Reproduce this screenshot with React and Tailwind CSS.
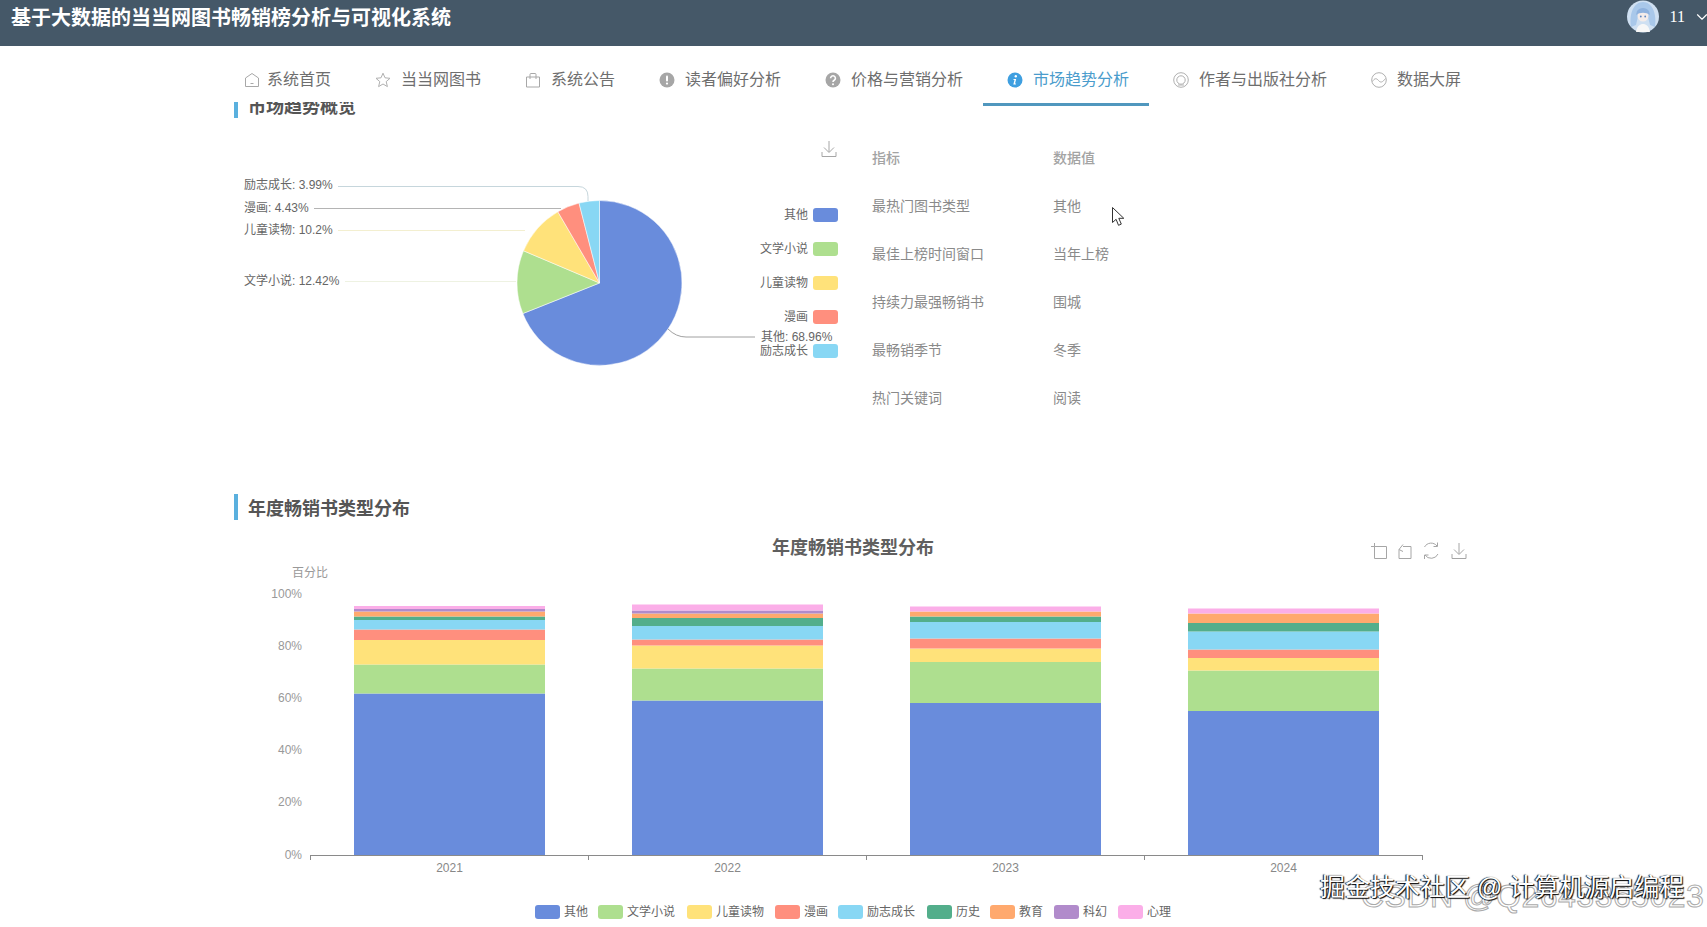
import { ChevronDown } from "lucide-react";

const fontClass = "font-['Liberation_Sans','Noto_Sans_CJK_SC',sans-serif]";

const colors = {
  other: "#698cdc",
  novel: "#aedf8f",
  kids: "#ffe27a",
  comic: "#ff8f7e",
  growth: "#88d7f4",
  history: "#53ae8b",
  edu: "#ffa96e",
  scifi: "#b18bcb",
  psych: "#fbaee8",
};

const navItems = [
  { label: "系统首页", icon: HomeIcon, iconClass: "flex w-[30px] justify-center" },
  { label: "当当网图书", icon: StarIcon },
  { label: "系统公告", icon: BagIcon },
  { label: "读者偏好分析", icon: WarnIcon },
  { label: "价格与营销分析", icon: HelpIcon },
  { label: "市场趋势分析", icon: InfoIcon, active: true },
  { label: "作者与出版社分析", icon: RingIcon },
  { label: "数据大屏", icon: WaveIcon },
];

const tableRows = [
  ["最热门图书类型", "其他"],
  ["最佳上榜时间窗口", "当年上榜"],
  ["持续力最强畅销书", "围城"],
  ["最畅销季节", "冬季"],
  ["热门关键词", "阅读"],
];

const pieData = [
  { name: "其他", value: 68.96, color: colors.other },
  { name: "文学小说", value: 12.42, color: colors.novel },
  { name: "儿童读物", value: 10.2, color: colors.kids },
  { name: "漫画", value: 4.43, color: colors.comic },
  { name: "励志成长", value: 3.99, color: colors.growth },
];

// segment tops in page pixels, bottom of the bar first
const bars = [
  {
    year: "2021",
    x: 354,
    segs: [
      [693.5, colors.other],
      [664.5, colors.novel],
      [640, colors.kids],
      [629.5, colors.comic],
      [620, colors.growth],
      [616.5, colors.history],
      [611.5, colors.edu],
      [609, colors.scifi],
      [606, colors.psych],
    ],
  },
  {
    year: "2022",
    x: 632,
    segs: [
      [700.5, colors.other],
      [668.5, colors.novel],
      [645.5, colors.kids],
      [639.5, colors.comic],
      [626, colors.growth],
      [618, colors.history],
      [613.5, colors.edu],
      [610.5, colors.scifi],
      [604.5, colors.psych],
    ],
  },
  {
    year: "2023",
    x: 910,
    segs: [
      [703, colors.other],
      [662, colors.novel],
      [648.5, colors.kids],
      [638.5, colors.comic],
      [622, colors.growth],
      [616.5, colors.history],
      [611.5, colors.edu],
      [606.5, colors.psych],
    ],
  },
  {
    year: "2024",
    x: 1188,
    segs: [
      [711, colors.other],
      [670.5, colors.novel],
      [658, colors.kids],
      [649.5, colors.comic],
      [631.5, colors.growth],
      [623, colors.history],
      [613.5, colors.edu],
      [608.5, colors.psych],
    ],
  },
];

const barLegend = [
  ["其他", colors.other, 535],
  ["文学小说", colors.novel, 598],
  ["儿童读物", colors.kids, 687],
  ["漫画", colors.comic, 775],
  ["励志成长", colors.growth, 838],
  ["历史", colors.history, 927],
  ["教育", colors.edu, 990],
  ["科幻", colors.scifi, 1054],
  ["心理", colors.psych, 1118],
];

function HomeIcon() {
  return (
    <svg width="16" height="16" viewBox="0 0 16 16" fill="none" stroke="#a8a8a8" strokeWidth="1">
      <path d="M8 1.5 14.5 6v8.5h-13V6z" strokeLinejoin="round" />
      <path d="M6.5 11.5h3" />
    </svg>
  );
}

function StarIcon() {
  return (
    <svg width="16" height="16" viewBox="0 0 16 16" fill="none" stroke="#b0b0b0" strokeWidth="1">
      <path d="m8 1.2 2 4.6 5 .5-3.8 3.3 1.2 5L8 12l-4.4 2.6 1.2-5L1 6.3l5-.5z" strokeLinejoin="round" />
    </svg>
  );
}

function BagIcon() {
  return (
    <svg width="16" height="16" viewBox="0 0 16 16" fill="none" stroke="#a8a8a8" strokeWidth="1">
      <path d="M1.5 5h13v10h-13z" />
      <path d="M5 7V2.5a1 1 0 0 1 1-1h4a1 1 0 0 1 1 1V7" />
    </svg>
  );
}

function WarnIcon() {
  return (
    <svg width="16" height="16" viewBox="0 0 16 16">
      <circle cx="8" cy="8" r="7.5" fill="#a6a6a6" />
      <rect x="7" y="3.5" width="2" height="6" rx="1" fill="#fff" />
      <circle cx="8" cy="11.6" r="1.1" fill="#fff" />
    </svg>
  );
}

function HelpIcon() {
  return (
    <svg width="16" height="16" viewBox="0 0 16 16">
      <circle cx="8" cy="8" r="7.5" fill="#a6a6a6" />
      <path d="M5.6 6.2A2.4 2.4 0 1 1 9.2 8.3C8.4 8.8 8 9.1 8 10" fill="none" stroke="#fff" strokeWidth="1.6" />
      <circle cx="8" cy="12.2" r="1" fill="#fff" />
    </svg>
  );
}

function InfoIcon() {
  return (
    <svg width="16" height="16" viewBox="0 0 16 16">
      <circle cx="8" cy="8" r="7.5" fill="#3f9fe0" />
      <circle cx="8.8" cy="4.2" r="1.2" fill="#fff" />
      <path d="M6.6 7h2.6l-1.2 4.6h1.1l-.3 1H6.3l1.2-4.6h-1.1z" fill="#fff" />
    </svg>
  );
}

function RingIcon() {
  return (
    <svg width="16" height="16" viewBox="0 0 16 16" fill="none" stroke="#b0b0b0" strokeWidth="1">
      <circle cx="8" cy="8" r="7.3" />
      <circle cx="8" cy="8" r="4.2" />
      <path d="M5 13h6" />
    </svg>
  );
}

function WaveIcon() {
  return (
    <svg width="16" height="16" viewBox="0 0 16 16" fill="none" stroke="#b0b0b0" strokeWidth="1">
      <circle cx="8" cy="8" r="7.3" />
      <path d="M1.5 9.5C3.5 6 5.5 6 7.5 8.5s4 2 7-2" />
    </svg>
  );
}

function NavItem({ label, icon: Icon, active, iconClass }) {
  return (
    <div
      className={
        active
          ? "flex h-full items-center border-b-[3px] border-[#5097be] pt-[10px] pl-[20px] pr-[20px] text-[16px] text-[#4a9ccc]"
          : "flex h-full items-center border-b-[3px] border-transparent pt-[10px] pl-[20px] pr-[20px] text-[16px] text-[#6e6e6e]"
      }
    >
      <span className={iconClass || "flex w-[30px] justify-center pr-[7px]"}>
        <Icon />
      </span>
      <span className="whitespace-nowrap">{label}</span>
    </div>
  );
}

function SaveIcon({ x, y }) {
  return (
    <g transform={`translate(${x} ${y})`} fill="none" stroke="#a6a6a6" strokeWidth="1">
      <path d="M7 0v11M2 6.5 7 11.5l5-5" />
      <path d="M0 11v4.5h14V11" />
    </g>
  );
}

function polar(r, deg) {
  const a = ((deg - 90) * Math.PI) / 180;
  return [599.5 + r * Math.cos(a), 283 + r * Math.sin(a)];
}

function PieChart() {
  let start = 0;
  const slices = pieData.map((d) => {
    const end = start + (d.value / 100) * 360;
    const [x1, y1] = polar(82.5, start);
    const [x2, y2] = polar(82.5, end);
    const path = `M599.5 283L${x1} ${y1}A82.5 82.5 0 ${end - start > 180 ? 1 : 0} 1 ${x2} ${y2}Z`;
    start = end;
    return <path key={d.name} d={path} fill={d.color} stroke="#fff" strokeWidth="0.5" />;
  });

  return (
    <svg width="630" height="340" viewBox="234 118 630 340" className="shrink-0">
      <SaveIcon x={822} y={141} />
      {slices}
      <g fill="none" strokeWidth="1">
        <path d="M338 186.5H578q10 0 10 10V201" stroke="#c6d6dc" />
        <path d="M314 208.5H561" stroke="#b4b4b4" />
        <path d="M338 230.5H525" stroke="#f3efd0" />
        <path d="M345 281.5H516" stroke="#eef2e2" />
        <path d="M668 329q8 8 18 8H755" stroke="#a0a0a0" />
      </g>
      <g fontSize="12" fill="#666">
        <text x="244" y="189">励志成长: 3.99%</text>
        <text x="244" y="212">漫画: 4.43%</text>
        <text x="244" y="234">儿童读物: 10.2%</text>
        <text x="244" y="285">文学小说: 12.42%</text>
        <text x="761" y="341">其他: 68.96%</text>
      </g>
      {pieData.map((d, i) => (
        <g key={d.name}>
          <text x="808" y={219 + i * 34} fontSize="12" fill="#666" textAnchor="end">{d.name}</text>
          <rect x="813" y={208 + i * 34} width="25" height="14" rx="3" fill={d.color} />
        </g>
      ))}
    </svg>
  );
}

function BarChart() {
  const ticks = [310, 588, 866, 1144, 1422];
  return (
    <svg width="1300" height="407" viewBox="234 520 1300 407" className="block">
      <text x="853" y="554" fontSize="18" fontWeight="700" fill="#5f5f5f" textAnchor="middle">年度畅销书类型分布</text>

      <g fill="none" stroke="#a6a6a6" strokeWidth="1">
        <path d="M1374.5 546.5h12v12h-12zM1371 546.5h3.5M1374.5 543v3.5" />
        <path d="M1403 546.5h8v12h-12v-9M1399 549.5l4-5M1399 549.5l4 2" />
        <path d="M1424.5 547A7.5 7.5 0 0 1 1437 546M1438 554A7.5 7.5 0 0 1 1425 555M1437.5 542.5v4h-4M1424.5 559v-4h4" />
      </g>
      <SaveIcon x={1452} y={543} />

      <text x="310" y="577" fontSize="12" fill="#999" textAnchor="middle">百分比</text>
      {["100%", "80%", "60%", "40%", "20%", "0%"].map((t, i) => (
        <text key={t} x="302" y={597.5 + i * 52.2} fontSize="12" fill="#999" textAnchor="end">{t}</text>
      ))}

      {bars.map((bar) => (
        <g key={bar.year}>
          {bar.segs.map(([top, color], i) => {
            const bottom = i === 0 ? 855 : bar.segs[i - 1][0];
            return <rect key={color} x={bar.x} y={top} width="191" height={bottom - top} fill={color} />;
          })}
          <text x={bar.x + 95.5} y="872" fontSize="12" fill="#888" textAnchor="middle">{bar.year}</text>
        </g>
      ))}

      <path d="M310 855.5H1422" stroke="#8a8a8a" strokeWidth="1" />
      {ticks.map((x) => (
        <path key={x} d={`M${x + 0.5} 855v5`} stroke="#8a8a8a" strokeWidth="1" />
      ))}

      {barLegend.map(([name, color, x]) => (
        <g key={name}>
          <rect x={x} y="905" width="25" height="14" rx="3" fill={color} />
          <text x={x + 29} y="916" fontSize="12" fill="#666">{name}</text>
        </g>
      ))}
    </svg>
  );
}

function Avatar() {
  return (
    <svg width="32" height="33" viewBox="0 0 32 33" className="-mt-[1px] shrink-0">
      <circle cx="16" cy="16.5" r="16" fill="#cfe0f2" />
      <path d="M4 27C2 13 7 2 16 2s14 11 12 25l-5-2-3-12-8-1-3 13z" fill="#a9c8ea" />
      <circle cx="16" cy="16" r="5.5" fill="#f4ecea" />
      <path d="M9 32c1-6 4-8 7-8s6 2 7 8z" fill="#f7f7f7" />
      <path d="M10 11c3-4 9-4 12 0l1 4c-4-3-10-3-14 0z" fill="#8fb2de" />
      <circle cx="13.8" cy="16.5" r="0.9" fill="#5f86c0" />
      <circle cx="18.2" cy="16.5" r="0.9" fill="#5f86c0" />
    </svg>
  );
}

function Cursor() {
  return (
    <svg width="14" height="20" viewBox="0 0 14 20" className="absolute left-[1112px] top-[207px]">
      <path d="M.5.5v15l3.6-3.2 2.4 6 2.8-1.2-2.5-5.8h5z" fill="#fff" stroke="#333" strokeWidth="1" />
    </svg>
  );
}

export default function App() {
  return (
    <div className={`relative h-screen w-full overflow-hidden bg-white ${fontClass}`}>
      <header className="flex h-[46px] items-start justify-between bg-[#455868] pl-[11px] text-white">
        <h1 className="whitespace-nowrap text-[20px] font-bold leading-[36px]">基于大数据的当当网图书畅销榜分析与可视化系统</h1>
        <div className="-mr-[4px] flex items-center">
          <Avatar />
          <span className="ml-[11px] font-['Liberation_Serif',serif] text-[16px] leading-[34px]">11</span>
          <ChevronDown className="ml-[8px] size-[18px]" strokeWidth={1.5} />
        </div>
      </header>

      <nav className="relative z-10 flex h-[60px] pl-[217px]">
        {navItems.map((item) => (
          <NavItem key={item.label} {...item} />
        ))}
      </nav>

      <main className="-mt-[4px] pl-[234px]">
        <div className="h-[16px] overflow-hidden">
          <div className="-mt-[10px] h-[26px] border-l-4 border-[#5ab0de] pl-[10px] text-[18px] font-bold leading-[30px] text-[#555]">
            市场趋势概览
          </div>
        </div>

        <section className="flex">
          <PieChart />
          <table className="ml-[8px] mt-[16px] h-fit w-[320px] table-fixed text-left text-[14px] text-[#8a8a8a]">
            <thead>
              <tr className="h-[48px] text-[#a3a3a3]">
                <th className="w-[181px] font-medium">指标</th>
                <th className="font-medium">数据值</th>
              </tr>
            </thead>
            <tbody>
              {tableRows.map(([name, value]) => (
                <tr key={name} className="h-[48px]">
                  <td>{name}</td>
                  <td>{value}</td>
                </tr>
              ))}
            </tbody>
          </table>
        </section>

        <div className="mt-[36px] h-[26px] border-l-4 border-[#5ab0de] pl-[10px] text-[18px] font-bold leading-[30px] text-[#555]">
          年度畅销书类型分布
        </div>
        <BarChart />
      </main>

      <Cursor />

      <div className="absolute left-[1361px] top-[873px] whitespace-nowrap text-[32px] leading-[46px] tracking-[0.5px] text-[#ffffffb0] [-webkit-text-stroke:1px_#aaaaaa]">
        CSDN @Q2643365023
      </div>
      <div className="absolute left-[1320px] top-[870px] whitespace-nowrap text-[25px] leading-[34px] text-white [text-shadow:1px_1px_1px_#000,-1px_0_1px_#000]">
        掘金技术社区 @ 计算机源启编程
      </div>
    </div>
  );
}
